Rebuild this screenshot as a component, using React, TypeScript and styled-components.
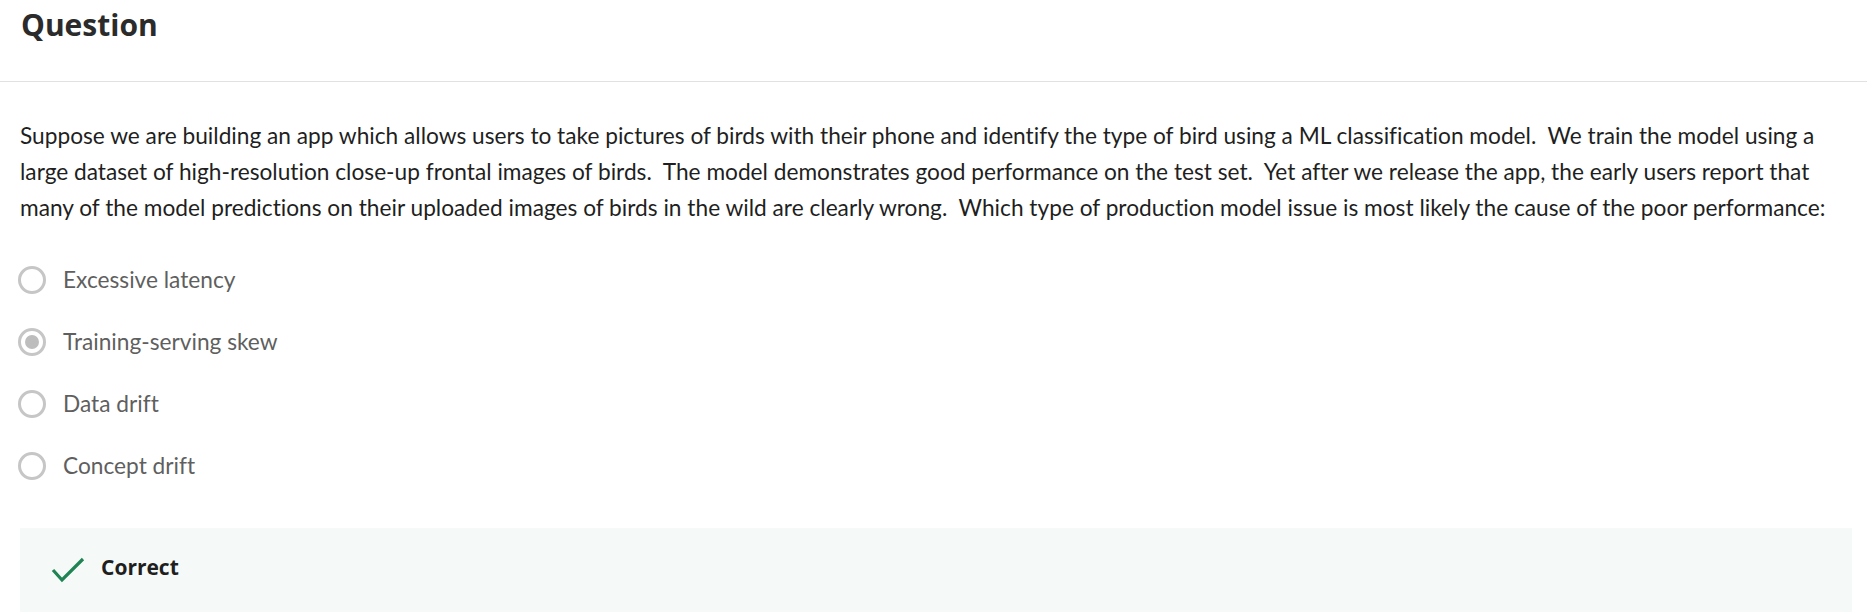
import React from "react";
import styled, { createGlobalStyle } from "styled-components";

const GlobalStyle = createGlobalStyle`
  html, body {
    margin: 0;
    padding: 0;
    background: #ffffff;
  }
  * { box-sizing: border-box; }
`;

const Page = styled.div`
  width: 1867px;
  font-family: "Lato", "Open Sans", sans-serif;
  font-variant-ligatures: none;
`;

const Header = styled.header`
  height: 82px;
  padding: 10px 21px 0;
  border-bottom: 1px solid #e1e1e1;
`;

const Title = styled.h2`
  margin: 0;
  font-family: "Open Sans", sans-serif;
  font-weight: 700;
  font-size: 30px;
  line-height: 30px;
  color: #2b2b2b;
`;

const Body = styled.section`
  padding: 0 15px 0 20px;
`;

const Prompt = styled.p`
  margin: 36px -15px 0 0;
  font-size: 22.7px;
  line-height: 36px;
  color: #1f1f1f;
`;

const Options = styled.div`
  margin-top: 23px;
  display: flex;
  flex-direction: column;
`;

const OptionRow = styled.label`
  height: 62px;
  display: flex;
  align-items: center;
  gap: 17px;
`;

const Radio = styled.span<{ $checked?: boolean }>`
  width: 28px;
  height: 28px;
  margin-left: -2px;
  border-radius: 50%;
  border: 3px solid #c6c6c6;
  display: flex;
  align-items: center;
  justify-content: center;
  flex: none;

  &::after {
    content: "";
    width: 14px;
    height: 14px;
    border-radius: 50%;
    background: #bdbdbd;
    display: ${(p) => (p.$checked ? "block" : "none")};
  }
`;

const OptionText = styled.span`
  font-size: 22.7px;
  line-height: 30px;
  color: #5f5f5f;
`;

const Feedback = styled.div`
  margin-top: 31px;
  height: 84px;
  background: #f5f9f8;
  display: flex;
  align-items: center;
  padding-left: 31px;
  gap: 16px;
`;

const FeedbackText = styled.span`
  font-family: "Open Sans", sans-serif;
  font-weight: 700;
  font-size: 21px;
  line-height: 21px;
  color: #1f1f1f;
  margin-bottom: 6px;
`;

const Check = () => (
  <svg width="34" height="26" viewBox="0 0 34 26" fill="none">
    <path d="M2 13 L11 23 L32 2" stroke="#1f8354" strokeWidth="3.2" />
  </svg>
);

const promptText =
  "Suppose we are building an app which allows users to take pictures of birds with their phone and identify the type of bird using a ML classification model.\u00a0 We train the model using a large dataset of high-resolution close-up frontal images of birds.\u00a0 The model demonstrates good performance on the test set.\u00a0 Yet after we release the app, the early users report that many of the model predictions on their uploaded images of birds in the wild are clearly wrong.\u00a0 Which type of production model issue is most likely the cause of the poor performance:";

const options = [
  { label: "Excessive latency", checked: false },
  { label: "Training-serving skew", checked: true },
  { label: "Data drift", checked: false },
  { label: "Concept drift", checked: false },
];

export default function App() {
  return (
    <Page>
      <GlobalStyle />
      <Header>
        <Title>Question</Title>
      </Header>
      <Body>
        <Prompt>{promptText}</Prompt>
        <Options>
          {options.map((o) => (
            <OptionRow key={o.label}>
              <Radio $checked={o.checked} />
              <OptionText>{o.label}</OptionText>
            </OptionRow>
          ))}
        </Options>
        <Feedback>
          <Check />
          <FeedbackText>Correct</FeedbackText>
        </Feedback>
      </Body>
    </Page>
  );
}
